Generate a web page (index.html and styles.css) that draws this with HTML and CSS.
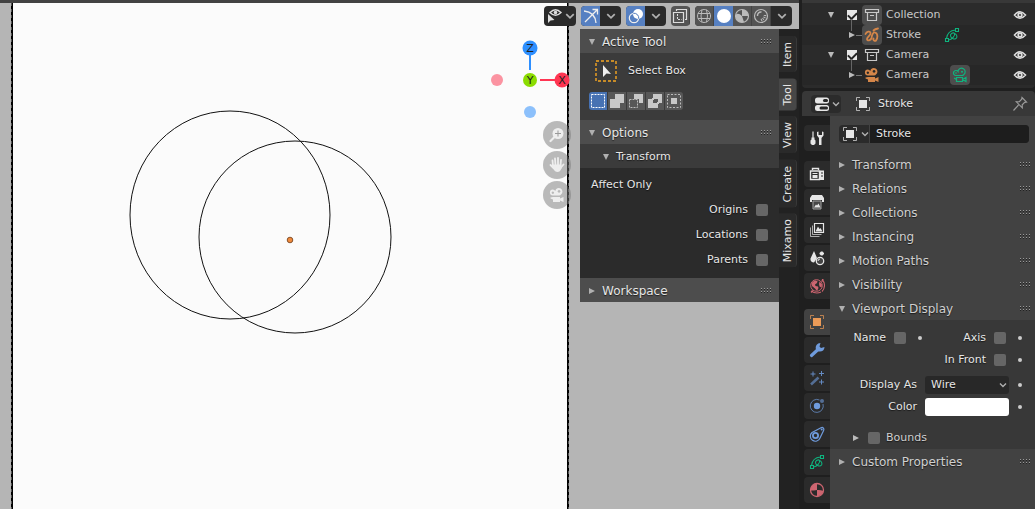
FILE: index.html
```html
<!DOCTYPE html>
<html lang="en">
<head>
  <meta charset="UTF-8" />
  <meta name="viewport" content="width=device-width, initial-scale=1.0"/>
  <title>Stroke - 3D Viewport</title>
  <link rel="stylesheet" href="styles.css">
</head>
<body>
  <!-- icon sprite -->
  <svg class="sprite" aria-hidden="true">
    <symbol id="chevron" viewBox="0 0 8 8"><path d="M1 2.5l3 3 3-3" fill="none" stroke="currentColor" stroke-width="1.4"/></symbol>
    <symbol id="tri-down" viewBox="0 0 8 8"><path d="M1 1h6L4 7z" fill="currentColor"/></symbol>
    <symbol id="tri-right" viewBox="0 0 8 8"><path d="M1 1v6l6-3z" fill="currentColor"/></symbol>
    <symbol id="grip" viewBox="0 0 12 6"><path d="M0 .5h11M0 3.5h11" stroke="#999" stroke-dasharray="1 2"/><path d="M0 1.5h11M0 4.5h11" stroke="#222" stroke-dasharray="1 2"/></symbol>
    <symbol id="eye" viewBox="0 0 16 16"><path d="M2.500 8Q8 1.500 13.500 8Q8 14.500 2.500 8z" fill="none" stroke="currentColor" stroke-width="1.600"/><circle cx="8" cy="8" r="2.700" fill="currentColor"/><circle cx="8" cy="8" r=".9" fill="#222"/></symbol>
    <symbol id="box" viewBox="0 0 16 16"><path d="M1.500 2.500h13v3h-13zM3.500 5.500v8h9v-8M6 8.500h4" fill="none" stroke="currentColor" stroke-width="1.200"/></symbol>
    <symbol id="object" viewBox="0 0 16 16"><path d="M4 4h8v8H4z" fill="currentColor"/><path d="M1.500 5V1.500H5M11 1.500h3.500V5M14.500 11v3.500H11M5 14.500H1.500V11" fill="none" stroke="currentColor" opacity=".7"/></symbol>
    <symbol id="stroke" viewBox="0 0 16 16"><path d="M1.500 7C2.500 4.500 6 3.500 6.500 6C7 8.500 3 10 3 12C3 14.500 7 13.500 7.500 11C8 8 9 5 11 5.500C14.500 6.500 13.500 12 12 13.500C11 14.500 8.500 13 9.500 11.500M9.500 3.500Q11 2 14 1.500" fill="none" stroke="currentColor" stroke-width="1.800" stroke-linecap="round"/></symbol>
    <symbol id="stroke-data" viewBox="0 0 16 16"><path d="M1.500 11.500h3v3h-3zM11.500 1.500h3v3h-3zM2.500 11.500C3 7 6 3.500 11.500 3" fill="none" stroke="currentColor" stroke-width="1.100"/><path d="M4.500 13C8 12.500 11.500 8.500 10.500 6.500C9.500 5 6 6.500 6.500 9C7 11.500 11 13 12.500 11C13.500 9.500 12.500 7 10.500 6.500" fill="none" stroke="currentColor" stroke-width="1.100"/></symbol>
    <symbol id="camera" viewBox="0 0 16 16"><path fill-rule="evenodd" d="M3.800 2.500Q5.500 2.500 6.300 4A3.600 3.600 0 1 1 12 7.500Q11.500 8.500 10 8.500H4A3 3 0 0 1 3.800 2.500zM3.800 4.500a1.200 1.200 0 1 0 .1 0zM10 3a1.400 1.400 0 1 0 .1 0zM4 10h7v1.500L14.500 10v5L11 13.500V15H4v-2.500L1.500 11.500V10.500z" fill="currentColor"/></symbol>
    <symbol id="camera-data" viewBox="0 0 16 16"><path d="M4 8.500a2.500 2.500 0 1 1 2-4a3.600 3.600 0 1 1 5.500 3.300Q11 8.500 10 8.500zM4.500 10.500h6v4h-6zM10.500 12.500l3.500-2v4l-3.500-2M4.500 12.500L2 11" fill="none" stroke="currentColor" stroke-width="1.200"/><circle cx="10" cy="4.700" r="1" fill="currentColor"/><circle cx="4" cy="6" r=".8" fill="currentColor"/></symbol>
    <symbol id="editor" viewBox="0 0 16 16"><rect x="1" y="1.500" width="14" height="6" rx="2.500" fill="currentColor"/><rect x="1" y="9" width="14" height="6" rx="2.500" fill="currentColor"/><rect x="9" y="3" width="5" height="3" rx="1.500" fill="#282828"/><rect x="5.500" y="10.500" width="8.500" height="3" rx="1.500" fill="#282828"/></symbol>
    <symbol id="pin" viewBox="0 0 16 16"><path d="M10 1.500l4.500 4.500-1.800.3-2.500 2.500.1 3-6-6 3-.2L9.700 3.200zM6.500 9L1.500 14.500" fill="none" stroke="currentColor" stroke-width="1.200"/></symbol>
    <symbol id="settings" viewBox="0 0 16 16"><path d="M4 1.500v8" stroke="currentColor" stroke-width="1.200"/><path d="M2.500 7.500h3v2l1 1v3L5 15H3l-1.500-1.500v-3l1-1zM8 2v3.500L10 8v7h2.500V8l2-2.500V2l-1.500-.5v3.500h-3.500V1.500z" fill="currentColor"/></symbol>
    <symbol id="render" viewBox="0 0 16 16"><path d="M3.500 4V2.500h6V4M1.500 5h9v8.500h-9z" fill="none" stroke="currentColor" stroke-width="1.400"/><path d="M3.500 7h5v1h-5zM3.500 9h5v3h-5zM11 4.500h4V14h-4z" fill="currentColor"/><path d="M12 7h2M12 10h2" stroke="#2b2b2b"/></symbol>
    <symbol id="output" viewBox="0 0 16 16"><path d="M3 1h10l2 3v4h-2V6H3v2H1V4z" fill="currentColor"/><path d="M4 7h8v8H4z" fill="#555" stroke="currentColor" opacity=".65"/><path d="M5 13.500l2-3 1 1 1.500-2 2 4z" fill="currentColor"/></symbol>
    <symbol id="layers" viewBox="0 0 16 16"><path d="M5.500 1.500h9v9h-9z" fill="none" stroke="currentColor" stroke-width="1.200"/><path d="M3.500 3.500v9h9M1.500 5.500v9h9" fill="none" stroke="currentColor" opacity=".7"/><path d="M6.500 9.500l2.500-5 1.500 2.500 1-1 2 3.500z" fill="currentColor"/></symbol>
    <symbol id="scene" viewBox="0 0 16 16"><path d="M5 1L1.500 8.500Q1 12 5 12.500L8 8zM12 1.500h1.500L15 3v1l-1.500 1.500H12L10.500 4V3z" fill="currentColor"/><circle cx="11" cy="11" r="3.700" fill="#444" stroke="currentColor" stroke-width="1.300"/><path d="M9 11a2 2 0 0 1 2-2" stroke="currentColor" fill="none"/></symbol>
    <symbol id="world" viewBox="0 0 16 16"><circle cx="7.500" cy="7.500" r="5.800" fill="none" stroke="currentColor"/><path d="M2.500 5l3-2.500 3 .5-.5 2-2 1.500.5 1.500 2.500.5.500 1.500L8 13l-2-2.500L3 8zM10.500 3.500l2.500 3-.5 3-2-1-.5-2.500z" fill="currentColor"/><path d="M13 1.500a8.500 8.500 0 0 1 0 12M2 14.500l2-2M12.500 3.500l2-2M2 13Q7 16.500 12 14" fill="none" stroke="currentColor" stroke-width="1.100"/></symbol>
    <symbol id="wrench" viewBox="0 0 16 16"><path d="M2.500 13.500L9 7.500" stroke="currentColor" stroke-width="3.200" stroke-linecap="round"/><path d="M11.500 1L10.500 4.500l1.500 1.500L15.500 5c0 4-4 5.500-7 4L7 7.500C6 4 8 1 11.500 1z" fill="currentColor"/></symbol>
    <symbol id="wand" viewBox="0 0 16 16"><path d="M2 14.500L9.500 7.500" stroke="currentColor" stroke-width="2.500" opacity=".6"/><path d="M4 1.500v5M1.500 4h5M12.500 1v5M10 3.500h5M12.500 9.500v5M10 12h5" stroke="currentColor" opacity=".85"/></symbol>
    <symbol id="physics" viewBox="0 0 16 16"><path d="M10.500 2A6.500 6.500 0 1 0 14 6" fill="none" stroke="currentColor" opacity=".7"/><circle cx="8" cy="8" r="3.200" fill="currentColor"/><circle cx="13" cy="3" r="2" fill="currentColor" opacity=".6"/></symbol>
    <symbol id="constraint" viewBox="0 0 16 16"><path d="M3 6.500L12 1.700c2-1 3.500 1 2.500 3L11 12a5 5 0 1 1-8-5.500z" fill="none" stroke="currentColor" stroke-width="1.200"/><circle cx="6.500" cy="9.500" r="2.600" fill="none" stroke="currentColor" stroke-width="1.800"/><circle cx="12.700" cy="3.500" r="1" fill="currentColor"/></symbol>
    <symbol id="material" viewBox="0 0 16 16"><circle cx="8" cy="8" r="6.500" fill="none" stroke="currentColor" stroke-width="1.300"/><path d="M8 8V1.500a6.500 6.500 0 0 0-6.500 7Q5 8.500 8 8zM8 8v6.500q5-1 6.500-5.500Q11 7.500 8 8z" fill="currentColor"/></symbol>
  </svg>

  <main class="area">
    <div class="viewport">
      <svg class="scene" aria-label="Camera view">
        <rect x="12" y="-2" width="556" height="2000" fill="#fbfbfb" stroke="#000" stroke-width="2"/>
        <path d="M11.500 0V2000M568.500 0V2000" stroke="#555" stroke-dasharray="3 3"/>
        <ellipse cx="230" cy="212" rx="100" ry="104" fill="none" stroke="#111"/>
        <circle cx="295" cy="234" r="96" fill="none" stroke="#111"/>
        <circle cx="290" cy="237" r="2.800" fill="#f08a3c" stroke="#6b3a16" stroke-width=".8"/>
      </svg>

      <div class="header">
        <div class="group">
          <button class="cell" aria-label="Object visibility"><svg viewBox="0 0 16 16"><path d="M4 4.500Q9.500-1 15 4.500Q9.500 10 4 4.500z" fill="none" stroke="#ddd" stroke-width="1.500"/><circle cx="9.500" cy="4.500" r="1.800" fill="#ddd"/><path d="M2 6v9l2.500-2.500L8.500 12z" fill="#ddd"/></svg></button>
          <button class="drop narrow" aria-label="Visibility menu"><svg><use href="#chevron"/></svg></button>
        </div>
        <div class="group">
          <button class="cell on" aria-label="Show gizmos"><svg viewBox="0 0 16 16"><path d="M1 3Q12 4 13 15M2 14L14 2M9.500 1.500h5v5" fill="none" stroke="#eee" stroke-width="1.300"/></svg></button>
          <button class="drop" aria-label="Gizmo menu"><svg><use href="#chevron"/></svg></button>
        </div>
        <div class="group">
          <button class="cell on" aria-label="Show overlays"><svg viewBox="0 0 16 16"><circle cx="10" cy="6" r="5" fill="#fff"/><circle cx="6" cy="10" r="4.700" fill="none" stroke="#eee" stroke-width="1.200"/><path d="M5.300 5.300A4.700 4.700 0 0 1 10.700 10.700" fill="none" stroke="#5680c2"/></svg></button>
          <button class="drop" aria-label="Overlay menu"><svg><use href="#chevron"/></svg></button>
        </div>
        <div class="group">
          <button class="cell light" aria-label="Toggle X-Ray"><svg viewBox="0 0 16 16"><path d="M1.500 4.500h10v10h-10zM4.500 3V1.500h10v10H13" fill="none" stroke="#ddd" stroke-width="1.200"/><path d="M5.500 6v5.500h4" fill="none" stroke="#ddd" stroke-dasharray="2 1"/></svg></button>
        </div>
        <div class="group">
          <button class="cell light" aria-label="Wireframe"><svg viewBox="0 0 16 16"><path d="M8 1.500a6.500 6.500 0 1 0 .1 0zM2 5.500h12M2 10.500h12M6 1.800q-2 6.200 0 12.400M10.500 1.800q2 6.200 0 12.400" fill="none" stroke="#bbb"/></svg></button>
          <button class="cell on" aria-label="Solid"><svg viewBox="0 0 16 16"><circle cx="8" cy="8" r="7" fill="#fff"/></svg></button>
          <button class="cell light" aria-label="Material preview"><svg viewBox="0 0 16 16"><circle cx="8" cy="8" r="6.500" fill="none" stroke="#bbb" stroke-width="1.200"/><path d="M8 8V1.500a6.500 6.500 0 0 1 6.500 6.500zM8 8l-4 5Q1.500 11 1.500 7Q4 4 8 8zM8 8l2 6Q6 15 4 13z" fill="#bbb"/></svg></button>
          <button class="cell light" aria-label="Rendered"><svg viewBox="0 0 16 16"><circle cx="8" cy="8" r="6.500" fill="none" stroke="#bbb" stroke-width="1.200"/><path d="M4.500 8a3.500 3.500 0 0 1 4-4" fill="none" stroke="#bbb" stroke-width="1.500"/><path d="M12 7q0 4-5 5.500" fill="none" stroke="#bbb" stroke-width="2.500" stroke-dasharray="1 1"/></svg></button>
          <button class="drop" aria-label="Shading menu"><svg><use href="#chevron"/></svg></button>
        </div>
      </div>

      <div class="region">
        <div class="nav">
          <svg class="gizmo" viewBox="0 0 80 80" role="img" aria-label="View axes">
            <path d="M39 16v15" stroke="#2e8fff" stroke-width="2"/>
            <path d="M49 41h16" stroke="#ff3653" stroke-width="2"/>
            <circle cx="39" cy="9" r="7.500" fill="#2e8fff"/>
            <circle cx="71" cy="41" r="7.500" fill="#ff3653"/>
            <circle cx="39" cy="41" r="7" fill="#8bdc00"/>
            <circle cx="6" cy="41" r="6" fill="#fb93a1"/>
            <circle cx="39" cy="73" r="6" fill="#8cc0fb"/>
            <text x="39" y="13">Z</text>
            <text x="71" y="45">X</text>
            <text x="39" y="45">Y</text>
          </svg>
          <button class="round" aria-label="Zoom"><svg viewBox="0 0 16 16"><circle cx="9" cy="6.500" r="5.500" fill="#eee"/><path d="M9 3.500v6M6 6.500h6" stroke="#999"/><path d="M5.500 10L1.500 14" stroke="#eee" stroke-width="2.200" stroke-linecap="round"/></svg></button>
          <button class="round" aria-label="Pan"><svg viewBox="0 0 16 16"><path d="M4 9L3.500 3.500M6.500 8L6 1.500M9 8V1M11.500 8L12 3M4.500 11L1.500 8M11.500 11l3-3.500" stroke="#eee" stroke-width="1.800" stroke-linecap="round"/><path d="M3.500 7.500h9v4Q11 15 8.500 15 6 15 4 11.500z" fill="#eee"/></svg></button>
          <button class="round" aria-label="Camera view"><svg><use href="#camera"/></svg></button>
        </div>

        <section class="npanel">
          <button class="title"><svg class="tri"><use href="#tri-down"/></svg>Active Tool<svg class="grip"><use href="#grip"/></svg></button>
          <div class="tool">
            <button class="select-box"><svg viewBox="0 0 22 22"><rect x="1" y="1" width="20" height="20" fill="none" stroke="#f5a623" stroke-width="1.400" stroke-dasharray="3 2"/><path d="M8 5v12l3.500-3.500L16 14z" fill="#eee"/></svg>Select Box</button>
            <div class="modes">
              <button class="on" aria-label="Set"><svg viewBox="0 0 16 16"><path d="M1.500 1.500h13v13h-13z" fill="none" stroke="#fff" stroke-dasharray="2 1"/></svg></button>
              <button aria-label="Extend"><svg viewBox="0 0 16 16"><path d="M6 1h9v9h-4v5H1V6h5z" fill="#c8c8c8"/></svg></button>
              <button aria-label="Subtract"><svg viewBox="0 0 16 16"><path d="M6 1h9v9h-4V6H6z" fill="#c8c8c8"/><path d="M1.500 6.500h8v8h-8z" fill="none" stroke="#bbb" stroke-dasharray="2 1"/></svg></button>
              <button aria-label="Difference"><svg viewBox="0 0 16 16"><path d="M6 1h9v9h-4V6H6zM1 6h5v4h5v5H1z" fill="#c8c8c8"/><path d="M5 5h2v2H5zM10 9h2v2h-2z" fill="#c8c8c8"/></svg></button>
              <button aria-label="Intersect"><svg viewBox="0 0 16 16"><path d="M5 5h6v6H5z" fill="#c8c8c8"/><path d="M1.500 1.500h13v13h-13z" fill="none" stroke="#bbb" stroke-dasharray="2 1.500"/></svg></button>
            </div>
          </div>
          <button class="title"><svg class="tri"><use href="#tri-down"/></svg>Options<svg class="grip"><use href="#grip"/></svg></button>
          <button class="title sub"><svg class="tri"><use href="#tri-down"/></svg>Transform</button>
          <div class="affect">
            <p>Affect Only</p>
            <label>Origins<input type="checkbox"></label>
            <label>Locations<input type="checkbox"></label>
            <label>Parents<input type="checkbox"></label>
          </div>
          <button class="title"><svg class="tri"><use href="#tri-right"/></svg>Workspace<svg class="grip"><use href="#grip"/></svg></button>
        </section>

        <nav class="vtabs">
          <button>Item</button>
          <button class="active">Tool</button>
          <button>View</button>
          <button>Create</button>
          <button>Mixamo</button>
        </nav>
      </div>
    </div>
  </main>

  <aside class="side">
    <section class="outliner">
      <div class="row">
        <button class="tri-btn" aria-label="Collapse Collection"><svg class="tri"><use href="#tri-down"/></svg></button>
        <input type="checkbox" class="tick" checked aria-label="Enable Collection">
        <span class="ico lit"><svg><use href="#box"/></svg></span>
        <span class="name">Collection</span>
        <button class="eye" aria-label="Hide Collection"><svg><use href="#eye"/></svg></button>
      </div>
      <div class="row child alt">
        <button class="tri-btn" aria-label="Expand Stroke"><svg class="tri"><use href="#tri-right"/></svg></button>
        <span class="ico lit orange"><svg><use href="#stroke"/></svg></span>
        <span class="name">Stroke</span>
        <span class="ico data green"><svg><use href="#stroke-data"/></svg></span>
        <button class="eye" aria-label="Hide Stroke"><svg><use href="#eye"/></svg></button>
      </div>
      <div class="row">
        <button class="tri-btn" aria-label="Collapse Camera"><svg class="tri"><use href="#tri-down"/></svg></button>
        <input type="checkbox" class="tick" checked aria-label="Enable Camera">
        <span class="ico"><svg><use href="#box"/></svg></span>
        <span class="name">Camera</span>
        <button class="eye" aria-label="Hide Camera collection"><svg><use href="#eye"/></svg></button>
      </div>
      <div class="row child alt">
        <button class="tri-btn" aria-label="Expand Camera"><svg class="tri"><use href="#tri-right"/></svg></button>
        <span class="ico orange"><svg><use href="#camera"/></svg></span>
        <span class="name">Camera</span>
        <span class="ico data lit green"><svg><use href="#camera-data"/></svg></span>
        <button class="eye" aria-label="Hide Camera"><svg><use href="#eye"/></svg></button>
      </div>
    </section>

    <section class="props">
      <div class="props-head">
        <button class="editor" aria-label="Editor type"><svg><use href="#editor"/></svg><svg class="chev"><use href="#chevron"/></svg></button>
        <svg class="i16"><use href="#object"/></svg>
        <span>Stroke</span>
        <button class="pin" aria-label="Pin"><svg><use href="#pin"/></svg></button>
      </div>
      <div class="props-main">
        <nav class="tabs">
          <button class="apart" aria-label="Tool"><svg><use href="#settings"/></svg></button>
          <button aria-label="Render"><svg><use href="#render"/></svg></button>
          <button aria-label="Output"><svg><use href="#output"/></svg></button>
          <button aria-label="View Layer"><svg><use href="#layers"/></svg></button>
          <button aria-label="Scene"><svg><use href="#scene"/></svg></button>
          <button class="apart red" aria-label="World"><svg><use href="#world"/></svg></button>
          <button class="active amber" aria-label="Object"><svg><use href="#object"/></svg></button>
          <button class="blue" aria-label="Modifiers"><svg><use href="#wrench"/></svg></button>
          <button class="blue" aria-label="Effects"><svg><use href="#wand"/></svg></button>
          <button class="blue" aria-label="Physics"><svg><use href="#physics"/></svg></button>
          <button class="blue" aria-label="Constraints"><svg><use href="#constraint"/></svg></button>
          <button class="green" aria-label="Object Data"><svg><use href="#stroke-data"/></svg></button>
          <button class="red" aria-label="Material"><svg><use href="#material"/></svg></button>
        </nav>
        <div class="props-body">
          <div class="datablock">
            <button aria-label="Browse objects"><svg class="i16"><use href="#object"/></svg><svg class="chev"><use href="#chevron"/></svg></button>
            <input type="text" value="Stroke" aria-label="Object name">
          </div>
          <button class="fold"><svg class="tri"><use href="#tri-right"/></svg>Transform<svg class="grip"><use href="#grip"/></svg></button>
          <button class="fold"><svg class="tri"><use href="#tri-right"/></svg>Relations<svg class="grip"><use href="#grip"/></svg></button>
          <button class="fold"><svg class="tri"><use href="#tri-right"/></svg>Collections<svg class="grip"><use href="#grip"/></svg></button>
          <button class="fold"><svg class="tri"><use href="#tri-right"/></svg>Instancing<svg class="grip"><use href="#grip"/></svg></button>
          <button class="fold"><svg class="tri"><use href="#tri-right"/></svg>Motion Paths<svg class="grip"><use href="#grip"/></svg></button>
          <button class="fold"><svg class="tri"><use href="#tri-right"/></svg>Visibility<svg class="grip"><use href="#grip"/></svg></button>
          <button class="fold"><svg class="tri"><use href="#tri-down"/></svg>Viewport Display<svg class="grip"><use href="#grip"/></svg></button>
          <div class="display">
            <div class="line">
              <label class="first">Name<input type="checkbox"></label><i class="dot"></i>
              <label class="last">Axis<input type="checkbox"></label><i class="dot"></i>
            </div>
            <div class="line">
              <label class="last">In Front<input type="checkbox"></label><i class="dot"></i>
            </div>
            <div class="line spaced">
              <label class="key" for="displayAs">Display As</label>
              <span class="select-wrap"><select id="displayAs"><option>Wire</option><option>Solid</option><option>Textured</option></select><svg class="chev"><use href="#chevron"/></svg></span>
              <i class="dot"></i>
            </div>
            <div class="line">
              <label class="key" for="color">Color</label>
              <input type="color" id="color" value="#ffffff">
              <i class="dot"></i>
            </div>
            <div class="bounds">
              <button class="tri-btn" aria-label="Expand Bounds"><svg class="tri"><use href="#tri-right"/></svg></button>
              <label><input type="checkbox">Bounds</label>
            </div>
          </div>
          <button class="fold"><svg class="tri"><use href="#tri-right"/></svg>Custom Properties<svg class="grip"><use href="#grip"/></svg></button>
        </div>
      </div>
    </section>
  </aside>
</body>
</html>
```
FILE: styles.css
```css
* {
  box-sizing: border-box;
}
body {
  margin: 0;
  height: 100vh;
  display: flex;
  gap: 3px;
  overflow: hidden;
  background: #1f1f1f;
  color: #e6e6e6;
  font: 11px/16px "DejaVu Sans", sans-serif;
  text-shadow: 0 1px 1px rgba(0,0,0,0.6);
}
button, input, select {
  font: inherit;
  color: inherit;
  text-shadow: inherit;
  margin: 0;
  padding: 0;
  border: none;
  background: none;
}
svg {
  width: 16px;
  height: 16px;
  flex: none;
  display: block;
}
.sprite {
  position: absolute;
  width: 0;
  height: 0;
}
.tri, .chev, .drop svg {
  width: 8px;
  height: 8px;
  color: #b0b0b0;
}
.grip {
  width: 12px;
  height: 6px;
  margin-left: auto;
}
input[type="checkbox"] {
  appearance: none;
  width: 12px;
  height: 12px;
  flex: none;
  border-radius: 2px;
  background: #666;
}

/* 3D viewport */
.area {
  flex: 1;
  min-width: 0;
  border-top: 3px solid #424242;
}
.viewport {
  position: relative;
  height: 100%;
  display: flex;
  flex-direction: column;
  background: #b5b5b5;
}
.scene {
  position: absolute;
  width: 100%;
  height: 100%;
}
.header {
  position: relative;
  display: flex;
  justify-content: flex-end;
  gap: 5px;
  padding: 3px 7px;
}
.group {
  display: flex;
  height: 20px;
  border-radius: 4px;
  overflow: hidden;
  background: #2a2a2a;
}
.cell, .drop {
  width: 19px;
  display: flex;
  align-items: center;
  justify-content: center;
}
.drop {
  width: 21px;
}
.drop.narrow {
  width: 13px;
}
.drop svg {
  width: 10px;
  height: 10px;
}
.light {
  background: #545454;
  border-right: 1px solid #444;
}
.cell.on {
  background: #5680c2;
}
.region {
  position: relative;
  flex: 1;
  display: flex;
  justify-content: flex-end;
}
.nav {
  width: 80px;
  margin: 9px 9px 0 0;
  padding-top: 1px;
  display: flex;
  flex-direction: column;
  align-items: flex-end;
  gap: 2px;
}
.gizmo {
  width: 80px;
  height: 80px;
}
.gizmo text {
  font-size: 11px;
  text-anchor: middle;
  fill: #222;
  text-shadow: none;
}
.round {
  width: 28px;
  height: 28px;
  border-radius: 50%;
  background: rgba(120,120,120,0.5);
  display: flex;
  align-items: center;
  justify-content: center;
  color: #eee;
}

/* sidebar */
.npanel {
  width: 199px;
  align-self: flex-start;
  background: #3b3b3b;
}
.title, .fold {
  width: 100%;
  height: 24px;
  display: flex;
  align-items: center;
  gap: 6px;
  padding: 1px 6px 0 8px;
  font-size: 12px;
  background: #4d4d4d;
}
.title.sub {
  padding-left: 22px;
  font-size: 11px;
  background: #3b3b3b;
}
.tool {
  height: 67px;
  padding: 7px 9px 0;
}
.select-box {
  display: flex;
  align-items: center;
  gap: 11px;
  padding: 0 6px;
  height: 22px;
}
.select-box svg {
  width: 22px;
  height: 22px;
}
.modes {
  display: flex;
  gap: 1px;
  margin-top: 10px;
}
.modes button {
  width: 18px;
  height: 18px;
  padding: 1px;
  background: #575757;
}
.modes .on {
  background: #4772b3;
}
.modes button:first-child {
  border-radius: 3px 0 0 3px;
}
.modes button:last-child {
  border-radius: 0 3px 3px 0;
}
.affect {
  display: flex;
  flex-direction: column;
  gap: 9px;
  padding: 9px 11px 10px;
  background: #2b2b2b;
}
.affect p {
  margin: 0;
}
.affect label {
  display: flex;
  align-items: center;
  justify-content: flex-end;
  gap: 8px;
}
.vtabs {
  width: 20px;
  background: #222;
  padding: 7px 2px 0 0;
  display: flex;
  flex-direction: column;
  gap: 6px;
}
.vtabs button {
  writing-mode: vertical-rl;
  transform: rotate(180deg);
  line-height: 18px;
  padding: 5px 0 6px;
  background: #2a2a2a;
  border-left: 1px solid #383838;
  border-radius: 4px 0 0 4px;
  text-shadow: none;
}
.vtabs .active {
  background: #474747;
}

/* outliner */
.side {
  width: 233px;
  display: flex;
  flex-direction: column;
  gap: 3px;
}
.outliner {
  border-top: 3px solid #383838;
  background: #2b2b2b;
  border-radius: 0 0 4px 4px;
  padding: 2px 0 3px;
  color: #c8c8c8;
  text-shadow: none;
}
.row {
  height: 20px;
  display: flex;
  align-items: center;
  padding: 0 7px 0 25px;
}
.row.child {
  padding-left: 46px;
}
.row.alt {
  background: #272727;
}
.tri-btn .tri {
  color: #bbb;
}
.row .tick {
  width: 10px;
  height: 10px;
  margin: 0 5px 0 12px;
  border-radius: 0;
  background: #e6e6e6;
  display: grid;
  place-items: center;
}
.tick:checked::before {
  content: "";
  width: 7px;
  height: 4px;
  border: solid #222;
  border-width: 0 0 2px 2px;
  transform: rotate(-45deg);
}
/* tree lines from the parent checkbox to the child icon */
.child .tri-btn {
  position: relative;
  display: flex;
  align-items: center;
}
.child .tri-btn::before {
  content: "";
  position: absolute;
  left: 3px;
  bottom: 8px;
  width: 1px;
  height: 12px;
  background: #666;
}
.child .tri-btn::after {
  content: "";
  width: 6px;
  height: 1px;
  background: #777;
}
.ico {
  width: 20px;
  height: 20px;
  display: grid;
  place-items: center;
  border-radius: 4px;
}
.ico.lit {
  background: #4d4d4d;
}
.name {
  margin-left: 4px;
}
.data {
  margin-left: 21px;
}
.eye {
  margin-left: auto;
  color: #ddd;
}
.orange {
  color: #d48649;
}
.amber {
  color: #ed9b57;
}
.green {
  color: #0fb37e;
}
.red {
  color: #cd6570;
}
.blue {
  color: #6f9bdc;
}

/* properties editor */
.props {
  flex: 1;
  display: flex;
  flex-direction: column;
  border-radius: 4px 4px 0 0;
  overflow: hidden;
}
.props-head {
  height: 25px;
  display: flex;
  align-items: center;
  gap: 7px;
  padding: 0 7px 0 9px;
  background: #383838;
}
.editor {
  display: flex;
  align-items: center;
  gap: 2px;
  width: 30px;
  height: 18px;
  padding-left: 3px;
  margin-right: 7px;
  border-radius: 4px;
  background: #2b2b2b;
}
.pin {
  margin-left: auto;
  color: #999;
}
.props-main {
  flex: 1;
  display: flex;
}
.tabs {
  width: 28px;
  padding: 9px 0 0 2px;
  display: flex;
  flex-direction: column;
  gap: 2px;
}
.tabs button {
  height: 26px;
  display: grid;
  place-items: center;
  border-radius: 4px 0 0 4px;
  background: #2b2b2b;
}
.tabs .apart {
  margin-bottom: 8px;
}
.tabs .active {
  background: #424242;
}
.props-body {
  flex: 1;
  min-width: 0;
  background: #424242;
}
.datablock {
  display: flex;
  height: 18px;
  margin: 9px 6px 9px 9px;
  border-radius: 4px;
  overflow: hidden;
  background: #2b2b2b;
}
.datablock button {
  display: flex;
  align-items: center;
  gap: 3px;
  width: 31px;
  padding-left: 3px;
  border-right: 1px solid #424242;
}
.datablock input {
  flex: 1;
  min-width: 0;
  padding-left: 6px;
  background: #1d1d1d;
}
.fold {
  background: none;
  padding-right: 3px;
  color: #d0d0d0;
}
.display {
  height: 129px;
  padding: 8px 13px 0 8px;
  background: #383838;
  display: flex;
  flex-direction: column;
  gap: 2px;
}
.line {
  display: flex;
  align-items: center;
  height: 20px;
}
.line.spaced {
  margin-top: 3px;
}
.line label {
  display: flex;
  align-items: center;
  gap: 8px;
}
.line .first {
  width: 68px;
  justify-content: flex-end;
}
.line .last {
  margin-left: auto;
}
.line .key {
  width: 79px;
  justify-content: flex-end;
  margin-right: 8px;
}
.dot {
  width: 4px;
  height: 4px;
  margin-left: 12px;
  border-radius: 50%;
  background: #ccc;
}
.select-wrap + .dot, #color + .dot {
  margin-left: 9px;
}
.select-wrap {
  flex: 1;
  display: grid;
  align-items: center;
}
select, .select-wrap .chev {
  grid-area: 1 / 1;
}
.select-wrap .chev {
  justify-self: end;
  margin-right: 2px;
  pointer-events: none;
}
select {
  appearance: none;
  width: 100%;
  height: 18px;
  padding-left: 6px;
  border-radius: 3px;
  background: #282828;
}
input[type="color"] {
  flex: 1;
  min-width: 0;
  height: 18px;
  border-radius: 3px;
  overflow: hidden;
}
input[type="color"]::-webkit-color-swatch-wrapper {
  padding: 0;
}
input[type="color"]::-webkit-color-swatch {
  border: none;
}
.bounds {
  display: flex;
  align-items: center;
  gap: 8px;
  padding-left: 14px;
  margin-top: 11px;
  color: #d0d0d0;
}
.bounds label {
  display: flex;
  align-items: center;
  gap: 6px;
}
```
